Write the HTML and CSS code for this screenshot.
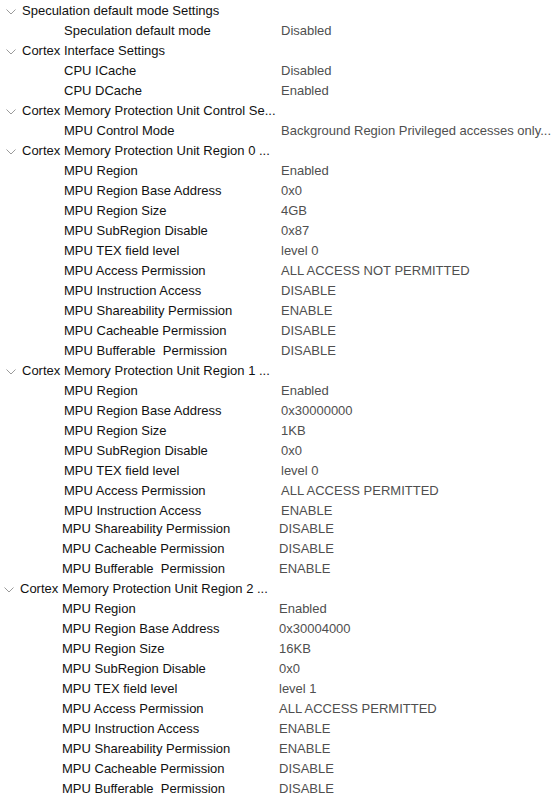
FILE: index.html
```html
<!DOCTYPE html>
<html>
<head>
<meta charset="utf-8">
<link rel="stylesheet" href="styles.css">
</head>
<body>
<div class="tree">
  <div class="pane">
    <div class="head"><svg class="chev" width="10" height="6" viewBox="0 0 10 6"><polyline points="0.5,0.5 5,5 9.5,0.5"/></svg><span class="htext">Speculation default mode Settings</span></div>
    <div class="row"><span class="label">Speculation default mode</span><span class="value">Disabled</span></div>

    <div class="head"><svg class="chev" width="10" height="6" viewBox="0 0 10 6"><polyline points="0.5,0.5 5,5 9.5,0.5"/></svg><span class="htext">Cortex Interface Settings</span></div>
    <div class="row"><span class="label">CPU ICache</span><span class="value">Disabled</span></div>
    <div class="row"><span class="label">CPU DCache</span><span class="value">Enabled</span></div>

    <div class="head"><svg class="chev" width="10" height="6" viewBox="0 0 10 6"><polyline points="0.5,0.5 5,5 9.5,0.5"/></svg><span class="htext">Cortex Memory Protection Unit Control Se...</span></div>
    <div class="row"><span class="label">MPU Control Mode</span><span class="value">Background Region Privileged accesses only...</span></div>

    <div class="head"><svg class="chev" width="10" height="6" viewBox="0 0 10 6"><polyline points="0.5,0.5 5,5 9.5,0.5"/></svg><span class="htext">Cortex Memory Protection Unit Region 0 ...</span></div>
    <div class="row"><span class="label">MPU Region</span><span class="value">Enabled</span></div>
    <div class="row"><span class="label">MPU Region Base Address</span><span class="value">0x0</span></div>
    <div class="row"><span class="label">MPU Region Size</span><span class="value">4GB</span></div>
    <div class="row"><span class="label">MPU SubRegion Disable</span><span class="value">0x87</span></div>
    <div class="row"><span class="label">MPU TEX field level</span><span class="value">level 0</span></div>
    <div class="row"><span class="label">MPU Access Permission</span><span class="value">ALL ACCESS NOT PERMITTED</span></div>
    <div class="row"><span class="label">MPU Instruction Access</span><span class="value">DISABLE</span></div>
    <div class="row"><span class="label">MPU Shareability Permission</span><span class="value">ENABLE</span></div>
    <div class="row"><span class="label">MPU Cacheable Permission</span><span class="value">DISABLE</span></div>
    <div class="row"><span class="label">MPU Bufferable&nbsp; Permission</span><span class="value">DISABLE</span></div>

    <div class="head"><svg class="chev" width="10" height="6" viewBox="0 0 10 6"><polyline points="0.5,0.5 5,5 9.5,0.5"/></svg><span class="htext">Cortex Memory Protection Unit Region 1 ...</span></div>
    <div class="row"><span class="label">MPU Region</span><span class="value">Enabled</span></div>
    <div class="row"><span class="label">MPU Region Base Address</span><span class="value">0x30000000</span></div>
    <div class="row"><span class="label">MPU Region Size</span><span class="value">1KB</span></div>
    <div class="row"><span class="label">MPU SubRegion Disable</span><span class="value">0x0</span></div>
    <div class="row"><span class="label">MPU TEX field level</span><span class="value">level 0</span></div>
    <div class="row"><span class="label">MPU Access Permission</span><span class="value">ALL ACCESS PERMITTED</span></div>
    <div class="row"><span class="label">MPU Instruction Access</span><span class="value">ENABLE</span></div>
  </div>

  <div class="pane pane-shift">
    <div class="row"><span class="label">MPU Shareability Permission</span><span class="value">DISABLE</span></div>
    <div class="row"><span class="label">MPU Cacheable Permission</span><span class="value">DISABLE</span></div>
    <div class="row"><span class="label">MPU Bufferable&nbsp; Permission</span><span class="value">ENABLE</span></div>

    <div class="head"><svg class="chev" width="10" height="6" viewBox="0 0 10 6"><polyline points="0.5,0.5 5,5 9.5,0.5"/></svg><span class="htext">Cortex Memory Protection Unit Region 2 ...</span></div>
    <div class="row"><span class="label">MPU Region</span><span class="value">Enabled</span></div>
    <div class="row"><span class="label">MPU Region Base Address</span><span class="value">0x30004000</span></div>
    <div class="row"><span class="label">MPU Region Size</span><span class="value">16KB</span></div>
    <div class="row"><span class="label">MPU SubRegion Disable</span><span class="value">0x0</span></div>
    <div class="row"><span class="label">MPU TEX field level</span><span class="value">level 1</span></div>
    <div class="row"><span class="label">MPU Access Permission</span><span class="value">ALL ACCESS PERMITTED</span></div>
    <div class="row"><span class="label">MPU Instruction Access</span><span class="value">ENABLE</span></div>
    <div class="row"><span class="label">MPU Shareability Permission</span><span class="value">ENABLE</span></div>
    <div class="row"><span class="label">MPU Cacheable Permission</span><span class="value">DISABLE</span></div>
    <div class="row"><span class="label">MPU Bufferable&nbsp; Permission</span><span class="value">DISABLE</span></div>
  </div>
</div>
</body>
</html>
```

FILE: styles.css
```css
html, body {
  margin: 0;
  padding: 0;
  background: #ffffff;
}

body {
  font-family: "Liberation Sans", Arial, sans-serif;
  font-size: 13px;
  line-height: 20px;
  color: #111111;
  overflow: hidden;
}

.tree {
  display: flex;
  flex-direction: column;
  padding-top: 1px;
}

.pane {
  display: flex;
  flex-direction: column;
}

.pane-shift {
  margin-top: -2px;
  margin-left: -2px;
}

.head {
  display: flex;
  align-items: center;
  height: 20px;
  padding-left: 6px;
  white-space: nowrap;
}

.chev {
  display: block;
  flex: none;
  margin-top: 2px;
}

.chev polyline {
  fill: none;
  stroke: #9a9a9a;
  stroke-width: 1;
}

.htext {
  margin-left: 6px;
  color: #111111;
}

.row {
  display: flex;
  height: 20px;
  padding-left: 64px;
  white-space: nowrap;
}

.label {
  flex: none;
  width: 217px;
  color: #111111;
}

.value {
  color: #4f4f4f;
}
```
